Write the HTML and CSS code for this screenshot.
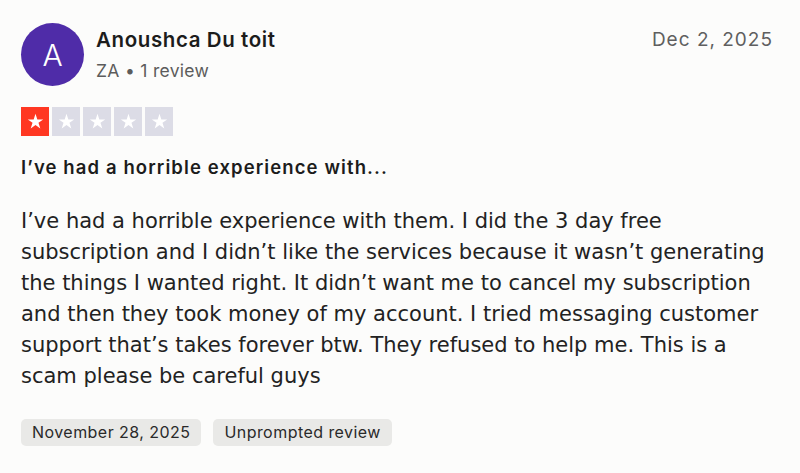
FILE: index.html
```html
<!DOCTYPE html>
<html lang="en">
<head>
<meta charset="utf-8">
<link rel="stylesheet" href="styles.css">
</head>
<body>
<article class="review">
  <header class="head">
    <div class="avatar">A</div>
    <div class="who">
      <div class="name">Anoushca Du toit</div>
      <div class="meta">ZA • 1 review</div>
    </div>
    <div class="date">Dec 2, 2025</div>
  </header>
  <div class="stars">
    <span class="star on"><svg viewBox="0 0 24 24"><path d="M12 3.2l2.1 6.4h6.7l-5.4 3.9 2.1 6.4L12 15.9l-5.5 4 2.1-6.4-5.4-3.9h6.7z"/></svg></span>
    <span class="star"><svg viewBox="0 0 24 24"><path d="M12 3.2l2.1 6.4h6.7l-5.4 3.9 2.1 6.4L12 15.9l-5.5 4 2.1-6.4-5.4-3.9h6.7z"/></svg></span>
    <span class="star"><svg viewBox="0 0 24 24"><path d="M12 3.2l2.1 6.4h6.7l-5.4 3.9 2.1 6.4L12 15.9l-5.5 4 2.1-6.4-5.4-3.9h6.7z"/></svg></span>
    <span class="star"><svg viewBox="0 0 24 24"><path d="M12 3.2l2.1 6.4h6.7l-5.4 3.9 2.1 6.4L12 15.9l-5.5 4 2.1-6.4-5.4-3.9h6.7z"/></svg></span>
    <span class="star"><svg viewBox="0 0 24 24"><path d="M12 3.2l2.1 6.4h6.7l-5.4 3.9 2.1 6.4L12 15.9l-5.5 4 2.1-6.4-5.4-3.9h6.7z"/></svg></span>
  </div>
  <h2 class="title">I’ve had a horrible experience with...</h2>
  <p class="body">I’ve had a horrible experience with them. I did the 3 day free subscription and I didn’t like the services because it wasn’t generating the things I wanted right. It didn’t want me to cancel my subscription and then they took money of my account. I tried messaging customer support that’s takes forever btw. They refused to help me. This is a scam please be careful guys</p>
  <div class="tags">
    <span class="tag">November 28, 2025</span>
    <span class="tag">Unprompted review</span>
  </div>
</article>
</body>
</html>
```
FILE: styles.css
```css
html, body {
  margin: 0;
  padding: 0;
  background: #fcfcfb;
}
body {
  font-family: Inter, "Noto Sans", sans-serif;
  color: #1c1c1c;
}
.review {
  padding: 23px 27px 0 21px;
}
.head {
  display: flex;
  align-items: flex-start;
}
.avatar {
  width: 63px;
  height: 63px;
  border-radius: 50%;
  background: #4f2ca8;
  color: #fff;
  display: flex;
  align-items: center;
  justify-content: center;
  font-size: 30px;
  font-weight: 300;
  flex: none;
}
.who {
  margin-left: 12px;
  flex: 1;
  padding-top: 3px;
}
.name {
  font-size: 20.5px;
  font-weight: 600;
  line-height: 28px;
  letter-spacing: 0.6px;
}
.meta {
  font-size: 17.5px;
  color: #5c5c5c;
  line-height: 24px;
  margin-top: 5px;
  letter-spacing: 0.3px;
}
.date {
  font-size: 19px;
  color: #5f5f5f;
  line-height: 28px;
  padding-top: 3px;
  letter-spacing: 1px;
}
.stars {
  display: flex;
  gap: 3px;
  margin-top: 21px;
}
.star {
  width: 28px;
  height: 29px;
  background: #dcdce6;
  display: flex;
  align-items: center;
  justify-content: center;
}
.star.on {
  background: #ff3722;
}
.star svg {
  width: 21px;
  height: 21px;
  fill: #fff;
}
.title {
  font-size: 18.5px;
  font-weight: 600;
  margin: 17px 0 0;
  line-height: 28px;
  letter-spacing: 1.1px;
}
.body {
  font-family: "DejaVu Sans", sans-serif;
  font-size: 21px;
  line-height: 31px;
  margin: 25px 0 0;
  color: #222;
}
.tags {
  display: flex;
  gap: 12px;
  margin-top: 27px;
}
.tag {
  background: #e9e9e7;
  border-radius: 5px;
  padding: 0 11px;
  font-size: 16px;
  line-height: 27px;
  color: #2a2a2a;
  letter-spacing: 0.45px;
}
```
